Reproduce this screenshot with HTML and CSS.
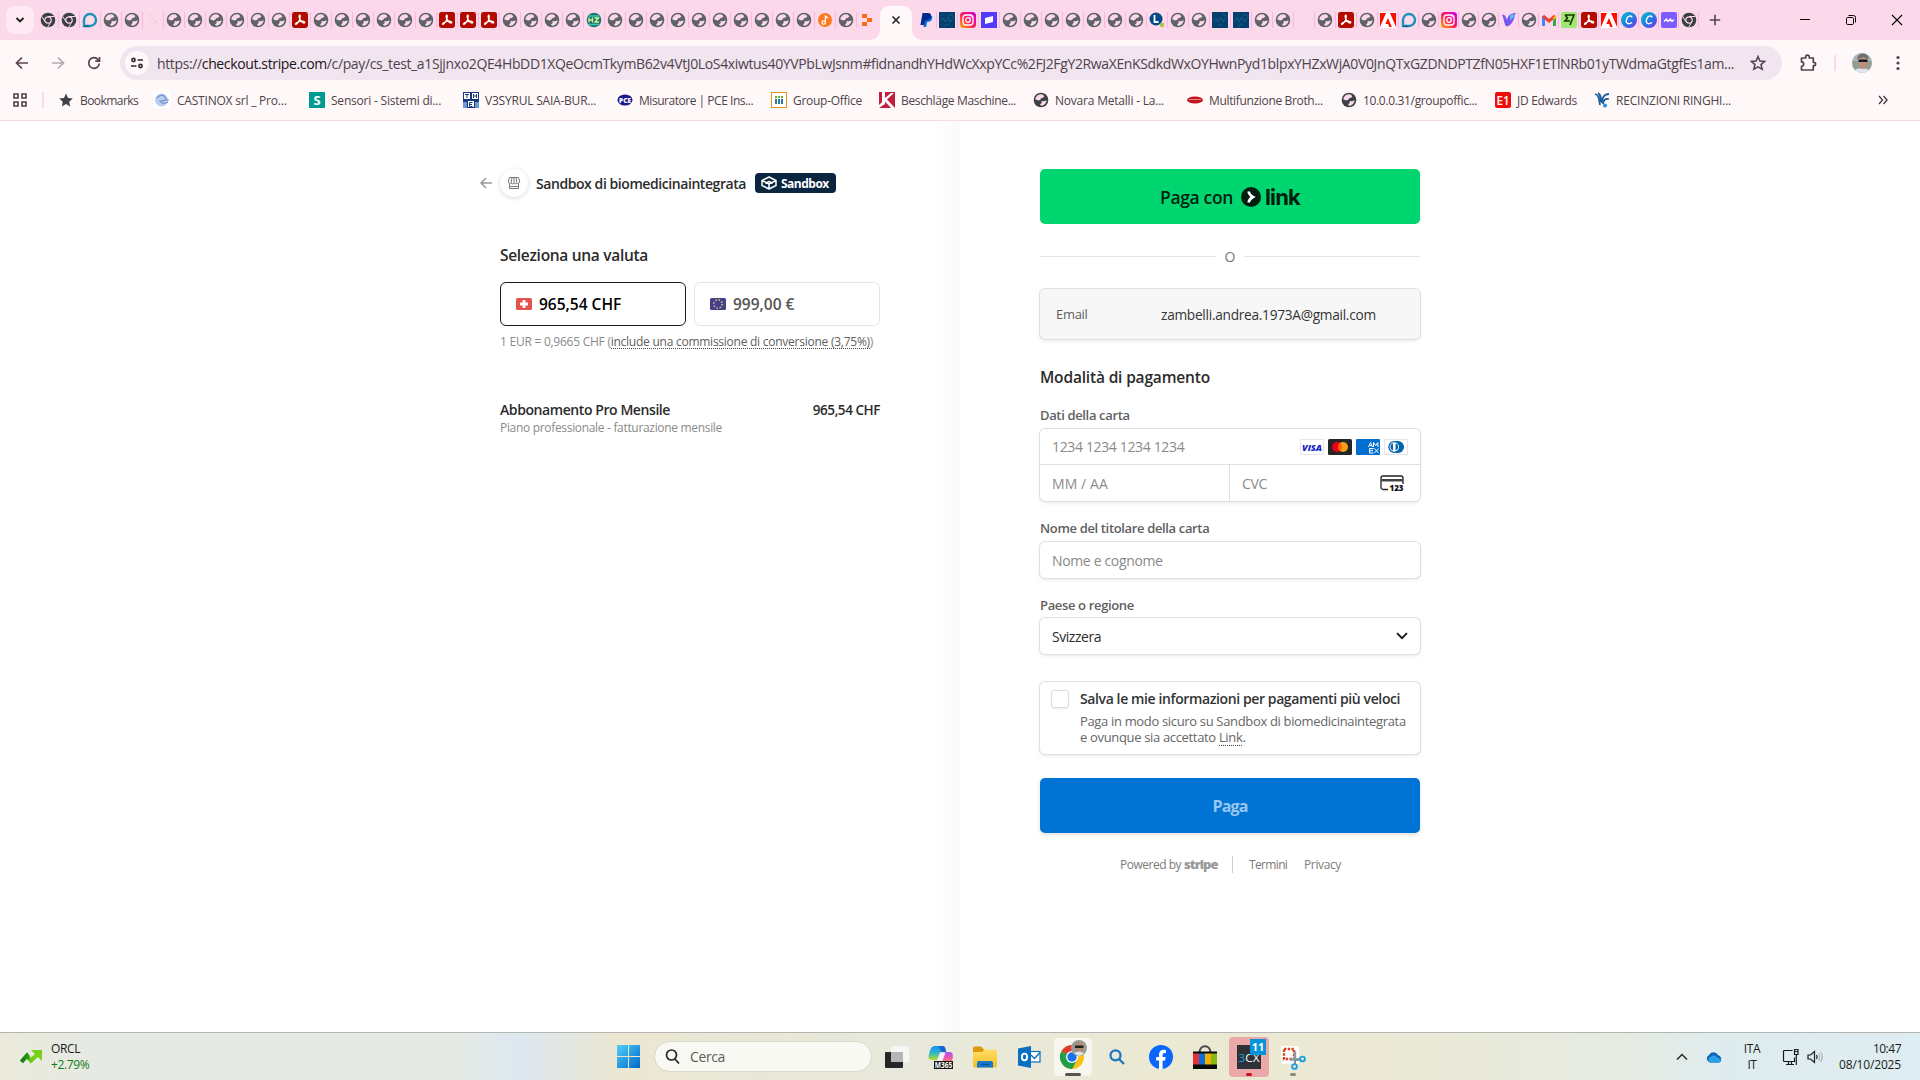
FILE: index.html
```html
<!DOCTYPE html>
<html lang="it">
<head>
<meta charset="utf-8">
<title>Sandbox di biomedicinaintegrata</title>
<link rel="stylesheet" href="styles.css">
</head>
<body>
<svg class="defs" width="0" height="0">
  <defs>
    <linearGradient id="ig" x1="0" y1="1" x2="1" y2="0"><stop offset="0" stop-color="#ffb300"/><stop offset=".45" stop-color="#ff1f5a"/><stop offset="1" stop-color="#c800e0"/></linearGradient>
    <linearGradient id="cv" x1="0" y1="0" x2="1" y2="1"><stop offset="0" stop-color="#00c4cc"/><stop offset=".5" stop-color="#1f7fe0"/><stop offset="1" stop-color="#7d2ae8"/></linearGradient>
    <linearGradient id="win" x1="0" y1="0" x2="1" y2="1"><stop offset="0" stop-color="#4fd0fb"/><stop offset="1" stop-color="#0067c8"/></linearGradient>
    <linearGradient id="fold" x1="0" y1="0" x2="0" y2="1"><stop offset="0" stop-color="#ffdf6b"/><stop offset="1" stop-color="#f9bd20"/></linearGradient>
    <linearGradient id="up" x1="0" y1="0" x2="1" y2="0"><stop offset="0" stop-color="#107c10"/><stop offset=".45" stop-color="#2a9a18"/><stop offset=".5" stop-color="#66c90e"/><stop offset="1" stop-color="#73d216"/></linearGradient>
    <linearGradient id="cop1" x1="0" y1="0" x2="0" y2="1"><stop offset="0" stop-color="#1b8df0"/><stop offset=".5" stop-color="#2fb6c8"/><stop offset="1" stop-color="#b6dc2c"/></linearGradient>
    <linearGradient id="cop2" x1="0" y1="0" x2="0" y2="1"><stop offset="0" stop-color="#a453f5"/><stop offset=".5" stop-color="#e85bb0"/><stop offset="1" stop-color="#ff8a5c"/></linearGradient>
  </defs>
  <symbol id="globe" viewBox="0 0 16 16"><circle cx="8" cy="8" r="7.3" fill="currentColor"/><path d="M7.4 2.2 9.8 2.6 11.4 4.4 9.6 6 8 6.2 7.4 7.8 5.2 8.6 2.2 7.2C2.6 4.6 4.6 2.6 7.4 2.2ZM8.6 9 11 9.2 13.6 8.2C13.4 11.2 11.2 13.6 8 13.8L7 12.4 8.6 11Z" fill="#fbd9ea"/></symbol>
  <symbol id="chrome-grey" viewBox="0 0 16 16"><circle cx="8" cy="8" r="7.3" fill="#3c3f43"/><circle cx="8" cy="8" r="3.2" fill="none" stroke="#fbd9ea" stroke-width="1.2"/><path d="M8 4.5h6.4M5 9.7 1.8 4.4M11 9.7 7.8 15" stroke="#fbd9ea" stroke-width="1"/></symbol>
  <symbol id="pdf" viewBox="0 0 16 16"><rect width="16" height="16" rx="2.4" fill="#b30b00"/><path d="M7.4 3.2c1.6-.4.8 3.2-.2 5.2S4.4 13 3.5 12.3C2.6 11.2 7.500 9 10.5 9.200s2.6 2 1.4 1.9C9.6 10.9 6.200 5.400 7.400 3.200Z" fill="none" stroke="#fff" stroke-width="1.2"/></symbol>
  <symbol id="drop" viewBox="0 0 16 16"><path d="M2 14V8a6 6 0 1 1 6 6Z" fill="none" stroke="#1993ba" stroke-width="2.4"/><path d="M1 15h7l-3-2Z" fill="#0b5d91"/></symbol>
  <symbol id="faint" viewBox="0 0 16 16"><path d="M4 3h2M6 7h2M9 10h3M4 12h2" stroke="#f4c9da" stroke-width="1.5"/></symbol>
  <symbol id="none" viewBox="0 0 16 16"></symbol>
  <symbol id="hz" viewBox="0 0 16 16"><circle cx="8" cy="8" r="7.3" fill="#1c7768"/><path d="M3 4h10M3 12.500h10" stroke="#35c8c0" stroke-width="1.5"/><path d="M3 5.500v5M3 8h3.500M6.500 5.500v5M8.500 6h4L9 10h4" fill="none" stroke="#d6f29a" stroke-width="1.300"/></symbol>
  <symbol id="note" viewBox="0 0 16 16"><circle cx="8" cy="8" r="7" fill="#ff7a1c"/><circle cx="6.7" cy="10.6" r="1.7" fill="none" stroke="#fff" stroke-width="1.2"/><path d="M8.4 10.5V4l2.6 2" fill="none" stroke="#fff" stroke-width="1.3"/></symbol>
  <symbol id="blocks" viewBox="0 0 16 16"><path d="M3 2h5v4H3zM3 10h5v4H3zM8 6h5v4H8z" fill="#ff6a13"/></symbol>
  <symbol id="paypal" viewBox="0 0 16 16"><path d="M7 4h7c1 3-1 6-5 6l-.8 5H5.500Z" fill="#0070e0"/><path d="M4.500 1h5.500c2.500 0 3.500 1.500 3 4-.7 2.500-3 3.500-6 3.500l-1 4.500H2.500Z" fill="#002991"/></symbol>
  <symbol id="dark" viewBox="0 0 16 16"><rect width="16" height="16" fill="#04406e"/><path d="M1 9 4 6l2 4 3-5 2 5 4-5M5 14l5-2M10 2l4 2" fill="none" stroke="#1f648f" stroke-width=".8"/></symbol>
  <symbol id="insta" viewBox="0 0 16 16"><rect width="16" height="16" rx="3.5" fill="url(#ig)"/><rect x="3" y="3" width="10" height="10" rx="3" fill="none" stroke="#fff" stroke-width="1.3"/><circle cx="8" cy="8" r="2.3" fill="none" stroke="#fff" stroke-width="1.3"/><circle cx="11" cy="5" r=".7" fill="#fff"/></symbol>
  <symbol id="stripe" viewBox="0 0 16 16"><rect width="16" height="16" fill="#533afd"/><path d="M4 6 12 4v6l-8 2Z" fill="#fff"/></symbol>
  <symbol id="ell" viewBox="0 0 16 16"><circle cx="7" cy="7" r="6.5" fill="#044a86"/><path d="M5.5 3v7h4" fill="none" stroke="#fff" stroke-width="1.8"/><circle cx="13" cy="13" r="2.3" fill="#a5c83b"/></symbol>
  <symbol id="adobe" viewBox="0 0 16 16"><rect width="16" height="16" fill="#fff"/><path d="M0 1h6L0 15ZM10 1h6v14ZM8 6l3.800 9H9.300l-1.200-3H5.300Z" fill="#fa0f00"/></symbol>
  <symbol id="vee" viewBox="0 0 16 16"><path d="M1 3c3-1 4 2 5 5 1-5 4-7 9-7-2 2-1 5-3 8-2 4-5 6-7 5C3 12 3 6 1 3Z" fill="#7a56f0"/><path d="M9 3c2 0 4-1 5-1-1 2-2 5-5 6Z" fill="#59b8ff"/></symbol>
  <symbol id="gmail" viewBox="0 0 16 16"><path d="M2.500 14V4" stroke="#4285f4" stroke-width="3"/><path d="M13.500 14V4" stroke="#34a853" stroke-width="3"/><path d="M2 4l6 5 6-5" fill="none" stroke="#ea4335" stroke-width="3.2"/><path d="M12 5.500 15 3v3l-3 2Z" fill="#fbbc04"/></symbol>
  <symbol id="wise" viewBox="0 0 16 16"><rect width="16" height="16" rx="2" fill="#9fe870"/><path d="M4 3h9L9 13M4 3l2.500 3L4 9h5" fill="none" stroke="#163300" stroke-width="1.6"/></symbol>
  <symbol id="canva" viewBox="0 0 16 16"><circle cx="8" cy="8" r="8" fill="url(#cv)"/><path d="M11 5.500C10.500 3 6.500 3.500 5.500 7.500S7.500 13 11 10.500" fill="none" stroke="#fff" stroke-width="1.4"/></symbol>
  <symbol id="wave" viewBox="0 0 16 16"><rect width="16" height="16" rx="2" fill="#7d5cff"/><path d="M3 9.500 5.500 7 7 9.500 9.500 7 11 9.500 13 7.500" fill="none" stroke="#fff" stroke-width="1.3"/></symbol>
</svg>

<header class="browser">
  <div class="tabstrip">
    <button class="tab-search"><svg width="10" height="10" viewBox="0 0 10 10"><path d="M1.500 3 5 6.500 8.500 3" fill="none" stroke="#222" stroke-width="1.9"/></svg></button>
    <div class="tabs" id="tabs-a"></div>
    <div class="tab-active"><svg width="10" height="10" viewBox="0 0 10 10"><path d="M1.500 1.500l7 7M8.500 1.500l-7 7" stroke="#222" stroke-width="1.6"/></svg></div>
    <div class="tabs" id="tabs-b"></div>
    <div class="tabs narrow" id="tabs-c"></div>
    <svg class="new-tab" width="12" height="12" viewBox="0 0 12 12"><path d="M6 .8v10.4M.8 6h10.4" stroke="#55404f" stroke-width="1.6"/></svg>
    <div class="window-controls">
      <svg width="12" height="12" viewBox="0 0 12 12"><path d="M1 5.500h10" stroke="#000"/></svg>
      <svg width="12" height="12" viewBox="0 0 12 12" fill="none" stroke="#000"><rect x="1.500" y="3.500" width="7" height="7" rx="1.2"/><path d="M3.500 1.500h5a2 2 0 0 1 2 2v5"/></svg>
      <svg width="12" height="12" viewBox="0 0 12 12"><path d="M1 1l10 10M11 1 1 11" stroke="#000" stroke-width="1.1"/></svg>
    </div>
  </div>
  <div class="toolbar">
    <svg class="nav" width="16" height="16" viewBox="0 0 16 16" fill="none" stroke="#5a4350" stroke-width="1.7"><path d="M14 8H3M8 2.500 2.500 8 8 13.500"/></svg>
    <svg class="nav" width="16" height="16" viewBox="0 0 16 16" fill="none" stroke="#b5a8af" stroke-width="1.7"><path d="M2 8h11M8 2.500 13.500 8 8 13.500"/></svg>
    <svg class="nav" width="16" height="16" viewBox="0 0 16 16" fill="none" stroke="#5a4350" stroke-width="1.7"><path d="M13.300 8.500A5.300 5.300 0 1 1 12 4.500L13.500 6M13.500 2v4.200H9.300"/></svg>
    <div class="omnibox">
      <span class="site-info"><svg width="14" height="14" viewBox="0 0 14 14" fill="none" stroke="#33262e" stroke-width="1.6"><circle cx="3.500" cy="4" r="1.6"/><path d="M7.500 4H13M1 10h5.500"/><circle cx="10.500" cy="10" r="1.6"/></svg></span>
      <span class="url">https://<b>checkout.stripe.com</b>/c/pay/cs_test_a1Sjjnxo2QE4HbDD1XQeOcmTkymB62v4VtJ0LoS4xiwtus40YVPbLwJsnm#fidnandhYHdWcXxpYCc%2FJ2FgY2RwaXEnKSdkdWxOYHwnPyd1blpxYHZxWjA0V0JnQTxGZDNDPTZfN05HXF1ETlNRb01yTWdmaGtgfEs1am...</span>
      <svg class="star" width="16" height="16" viewBox="0 0 16 16"><path d="M8 1.500 9.900 6l4.800.4L11 9.600l1.200 4.700L8 11.800l-4.200 2.500L5 9.600 1.300 6.400 6.100 6Z" fill="none" stroke="#55404f" stroke-width="1.5"/></svg>
    </div>
    <svg class="ext" width="18" height="18" viewBox="0 0 18 18"><path d="M2.500 4h4.200V3a1.800 1.800 0 0 1 3.600 0v1h4v4.300h.6a1.700 1.700 0 0 1 0 3.400h-.6V16H2.500v-3.700a2.200 2.200 0 0 0 0-4.400Z" fill="none" stroke="#55404f" stroke-width="1.7" stroke-linejoin="round"/></svg>
    <i class="tool-sep"></i>
    <svg class="avatar" width="20" height="20" viewBox="0 0 20 20"><clipPath id="av"><circle cx="10" cy="10" r="10"/></clipPath><g clip-path="url(#av)"><rect width="20" height="20" fill="#8fa08c"/><path d="M0 0h20v8H0Z" fill="#a9b5ba"/><ellipse cx="11" cy="9" rx="5" ry="7" fill="#b98f7c"/><path d="M5 6c1-7 11-7 12 0l-6-2Z" fill="#6d6d6d"/><path d="M6.500 6.500h9v2.500H6.500Z" fill="#1c1c22"/><path d="M2 20c1-5 5-5 9-4 4-1 7 1 8 4Z" fill="#dfe6f2"/></g></svg>
    <svg class="menu" width="4" height="16" viewBox="0 0 4 16" fill="#55404f"><circle cx="2" cy="2.500" r="1.6"/><circle cx="2" cy="8" r="1.6"/><circle cx="2" cy="13.500" r="1.6"/></svg>
  </div>
  <nav class="bookmarks">
    <svg class="apps" width="14" height="14" viewBox="0 0 14 14" fill="none" stroke="#4a4047" stroke-width="1.6"><path d="M1 1h4v4H1zM9 1h4v4H9zM1 9h4v4H1zM9 9h4v4H9z"/></svg>
    <i class="tool-sep"></i>
    <a class="bm b1"><svg viewBox="0 0 16 16"><path d="M8 1.500 10 6l4.800.5L11.200 9.800l1 4.700L8 12l-4.200 2.500 1-4.700L1.200 6.500 6 6Z" fill="#3f4247"/></svg><span>Bookmarks</span></a>
    <a class="bm b2"><svg viewBox="0 0 16 16"><rect width="16" height="16" fill="#fff"/><circle cx="7.500" cy="8" r="6.500" fill="#bccdee"/><path d="M3 6q5-5 8-1t-5 4q3 4 8 1M12 8h3" fill="none" stroke="#6f90cc" stroke-width="1.2"/></svg><span>CASTINOX srl _ Pro...</span></a>
    <a class="bm b3"><svg viewBox="0 0 16 16"><rect width="16" height="16" fill="#009b93"/><text x="8" y="13" font-size="13" font-weight="700" text-anchor="middle" fill="#fff">S</text></svg><span>Sensori - Sistemi di...</span></a>
    <a class="bm b4"><svg viewBox="0 0 16 16"><rect width="16" height="16" fill="#16387f"/><path d="M1 1h6v6H1zM9 1h6v6H9zM5 9h6v6H5z" fill="#fff"/><path d="M2 2.500h4M4 2.500V6M10.500 2v4M13.500 2v4M10.500 4h3M9.500 10.500h-3v4h3M6.500 12.500h2.500" fill="none" stroke="#16387f"/><path d="M0 10h4v6H0zM12 10h4v6h-4z" fill="#6c9ad0"/></svg><span>V3SYRUL SAIA-BUR...</span></a>
    <a class="bm b5"><svg viewBox="0 0 16 16"><ellipse cx="8" cy="8" rx="7.500" ry="5.500" fill="#171b8c"/><text x="8" y="10.600" font-size="7" font-weight="800" text-anchor="middle" textLength="12" lengthAdjust="spacingAndGlyphs" fill="#fff">PCE</text></svg><span>Misuratore | PCE Ins...</span></a>
    <a class="bm b6"><svg viewBox="0 0 16 16"><rect x=".5" y=".5" width="15" height="15" fill="#fff" stroke="#e8930c"/><path d="M4 4h2v2H4zM7 4h2v2H7zM10 4h2v2h-2z" fill="#6ca52c"/><path d="M4 7h2v5H4zM7 7h2v5H7zM10 7h2v5h-2z" fill="#2a7ba6"/></svg><span>Group-Office</span></a>
    <a class="bm b7"><svg viewBox="0 0 16 16"><rect width="16" height="16" fill="#c11e3c"/><path d="M3 0h3v6l6-5h3L8 7.500 16 16h-4L6 9.500V12L0 16V13l3-3Z" fill="#fff"/></svg><span>Beschläge Maschine...</span></a>
    <a class="bm b8"><svg class="dark-globe"><use href="#globe"/></svg><span>Novara Metalli - La...</span></a>
    <a class="bm b9"><svg viewBox="0 0 16 16"><ellipse cx="8" cy="8" rx="8" ry="3.500" fill="#c2161c"/><path d="M2 7.500h12" stroke="#e08a86" stroke-width="1"/></svg><span>Multifunzione Broth...</span></a>
    <a class="bm b10"><svg class="dark-globe"><use href="#globe"/></svg><span>10.0.0.31/groupoffic...</span></a>
    <a class="bm b11"><svg viewBox="0 0 16 16"><rect width="16" height="16" rx="2" fill="#f20d0d"/><text x="8" y="12.800" font-size="12.500" font-weight="600" text-anchor="middle" textLength="13" lengthAdjust="spacingAndGlyphs" fill="#fff">E1</text></svg><span>JD Edwards</span></a>
    <a class="bm b12"><svg viewBox="0 0 16 16"><path d="M1 2c4 1 4 5 5 11M4 1c3 2 3 5 3 9M15 2C10 2 8 6 8 11M15 7c-4-1-6 2-6 5" fill="none" stroke="#1d5f9e" stroke-width="1.8"/><circle cx="11" cy="13.500" r="2" fill="#1f8fd6"/></svg><span>RECINZIONI RINGHI...</span></a>
    <svg class="more" width="10" height="10" viewBox="0 0 10 10"><path d="M1 1l3.500 4L1 9M5.500 1 9 5 5.500 9" fill="none" stroke="#4a4047" stroke-width="1.4"/></svg>
  </nav>
</header>

<main class="page">
  <section class="summary">
    <div class="merchant">
      <svg class="back" width="12" height="12" viewBox="0 0 12 12"><path d="M12 6H1.500M6 1 1 6l5 5" fill="none" stroke="#999" stroke-width="1.5"/></svg>
      <span class="shop"><svg width="14" height="14" viewBox="0 0 14 14" fill="none" stroke="#777" stroke-width="1"><path d="M2.500 1.500h9l1 3.500v1.500a1.400 1.400 0 0 1-2.700 0 1.400 1.400 0 0 1-2.800 0 1.400 1.400 0 0 1-2.800 0 1.400 1.400 0 0 1-2.700 0V5ZM5 1.500 4.300 6M9 1.500 9.700 6M7 1.500V6M2.500 8v4.500h9V8M3 10.500h8"/></svg></span>
      <span class="name">Sandbox di biomedicinaintegrata</span>
      <span class="badge"><svg width="16" height="14" viewBox="0 0 16 14" fill="none" stroke="#fff" stroke-width="1.5" stroke-linejoin="round"><path d="M8 1 15 4.500v5L8 13 1 9.500v-5ZM1 4.500 8 8l7-3.500M8 8v5M4.500 7.500 8 5.500l3.500 2"/></svg><span>Sandbox</span></span>
    </div>
    <h2 class="heading currency-title">Seleziona una valuta</h2>
    <div class="currencies">
      <button class="currency selected"><svg width="16" height="12" viewBox="0 0 16 12"><rect width="16" height="12" rx="1.500" fill="#e5534f"/><path d="M6.600 2h2.800v2.600H12v2.800H9.400V10H6.600V7.400H4V4.600h2.600Z" fill="#fff"/></svg><span>965,54 CHF</span></button>
      <button class="currency"><svg width="16" height="12" viewBox="0 0 16 12"><rect width="16" height="12" rx="1.500" fill="#43408c"/><circle cx="8" cy="6" r="4.200" fill="none" stroke="#f0c65c" stroke-width="1.500" stroke-dasharray="1.500 1.800"/></svg><span>999,00 €</span></button>
    </div>
    <p class="rate">1 EUR = 0,9665 CHF (<u>include una commissione di conversione (3,75%)</u>)</p>
    <div class="item"><span class="product">Abbonamento Pro Mensile</span><span class="amount">965,54 CHF</span></div>
    <p class="desc">Piano professionale - fatturazione mensile</p>
  </section>

  <section class="payment">
    <button class="link-pay"><span class="with">Paga con</span><svg width="20" height="20" viewBox="0 0 20 20"><circle cx="10" cy="10" r="10" fill="#011e0f"/><path d="M7.500 4.500c.7 2.600 2 4.300 4.400 5.500-2.400 1.200-3.700 2.900-4.400 5.500" fill="none" stroke="#fff" stroke-width="2.600"/></svg><span class="link-word">link</span></button>
    <div class="or"><span>O</span></div>
    <div class="box email"><span class="k">Email</span><span class="v">zambelli.andrea.1973A@gmail.com</span></div>
    <h2 class="heading method">Modalità di pagamento</h2>
    <label class="label first">Dati della carta</label>
    <div class="box card">
      <div class="row number"><span class="ph">1234 1234 1234 1234</span>
        <div class="brands">
          <svg viewBox="0 0 24 16"><rect x=".5" y=".5" width="23" height="15" fill="#fff" stroke="#e6e6e6"/><text x="12" y="11.600" font-size="9.500" font-weight="800" font-style="italic" text-anchor="middle" textLength="20" lengthAdjust="spacingAndGlyphs" fill="#1a1fc8">VISA</text></svg>
          <svg viewBox="0 0 24 16"><rect width="24" height="16" rx="1.500" fill="#252525"/><circle cx="9" cy="8" r="5" fill="#eb001b"/><circle cx="15" cy="8" r="5" fill="#f79e1b"/><path d="M12 4a5 5 0 0 1 0 8 5 5 0 0 1 0-8Z" fill="#ff5f00"/></svg>
          <svg viewBox="0 0 24 16"><rect width="24" height="16" rx="1" fill="#016fd0"/><g fill="none" stroke="#fff" stroke-width="1"><path d="M12.500 8l2-4.500 2 4.500M13.300 6.500h2.500M17.500 8V3.500l2.200 3 2.200-3V8M17.500 9.500h-4v4.500h4M13.500 11.700h3.500M18.500 9.500l4 4.500M22.500 9.500l-4 4.500"/></g></svg>
          <svg viewBox="0 0 24 16"><rect x=".5" y=".5" width="23" height="15" fill="#fff" stroke="#e6e6e6"/><path d="M10.500 2h3.500a6 6 0 0 1 0 12h-3.500Z" fill="#0165ac"/><circle cx="10.300" cy="8" r="5.400" fill="#fff" stroke="#0165ac" stroke-width="1.300"/><path d="M9 4.300a3.900 3.900 0 0 0 0 7.400ZM11.600 4.300a3.900 3.900 0 0 1 0 7.400Z" fill="#0165ac"/></svg>
        </div>
      </div>
      <div class="row split">
        <div class="cell"><span class="ph mm">MM / AA</span></div>
        <div class="cell cvc"><span class="ph">CVC</span><svg width="24" height="17" viewBox="0 0 24 17"><path d="M8 14.500H3A2 2 0 0 1 1 12.500V3A2 2 0 0 1 3 1h18a2 2 0 0 1 2 2v6" fill="none" stroke="#222" stroke-width="1.300"/><path d="M1 4h22v2.500H1Z" fill="#444"/><text x="16.500" y="16.300" font-size="8.500" font-weight="800" text-anchor="middle" textLength="14" lengthAdjust="spacingAndGlyphs" fill="#111">123</text></svg></div>
      </div>
    </div>
    <label class="label holder">Nome del titolare della carta</label>
    <div class="box input"><span class="ph">Nome e cognome</span></div>
    <label class="label region">Paese o regione</label>
    <div class="box input select"><span class="country">Svizzera</span><svg width="12" height="8" viewBox="0 0 12 8"><path d="M1 1.200 6 6.200l5-5" fill="none" stroke="#111" stroke-width="1.700"/></svg></div>
    <div class="box save">
      <i class="check"></i>
      <div>
        <div class="save-title">Salva le mie informazioni per pagamenti più veloci</div>
        <p class="save-text">Paga in modo sicuro su Sandbox di biomedicinaintegrata<br>e ovunque sia accettato <u>Link</u>.</p>
      </div>
    </div>
    <button class="pay">Paga</button>
    <footer class="foot"><span class="powered">Powered by</span><span class="stripe">stripe</span><i></i><span class="terms">Termini</span><span class="privacy">Privacy</span></footer>
  </section>
</main>

<div class="taskbar">
  <div class="widget"><svg width="22" height="14" viewBox="0 0 22 14"><path d="M1.500 12 7 5.500l4 5L17 5" fill="none" stroke="url(#up)" stroke-width="4.200"/><path d="M11 0h11v11Z" fill="#73d216"/></svg><div class="quote"><span>ORCL</span><span class="gain">+2.79%</span></div></div>
  <div class="dock">
    <span class="app"><svg width="23" height="23" viewBox="0 0 23 23" fill="url(#win)"><path d="M0 0h11v11H0zM12 0h11v11H12zM0 12h11v11H0zM12 12h11v11H12z"/></svg></span>
    <div class="search"><svg width="15" height="15" viewBox="0 0 15 15" fill="none" stroke="#222" stroke-width="1.700"><circle cx="6.500" cy="6" r="5"/><path d="M10 10l4 4.500"/></svg><span>Cerca</span></div>
    <span class="app"><svg width="24" height="22" viewBox="0 0 24 22"><rect y="6" width="18" height="16" rx="1" fill="#262626"/><rect x="6" width="18" height="16" rx="1" fill="#f6f6f6"/><path d="M6 6h12v10H6Z" fill="#b5b5b5"/></svg></span>
    <span class="app"><svg width="26" height="24" viewBox="0 0 26 24"><path d="M7 1h7c3 0 3.500 2 4 6h-4c-2 0-3 2-3.500 4L9 15H4c-4 0-4-3-3-6 1-3.500 2-8 6-8Z" fill="url(#cop1)"/><path d="M10 1h4c3 0 3.500 2 4 6h-5c-1-2-1-5-3-6Z" fill="#1464d6"/><path d="M18 7h3c4 0 4.500 3 3.500 7l-1.500 4h-13l3.500-8c.8-2 2-3 4.500-3Z" fill="url(#cop2)"/><path d="M11.500 11l2-3.500h4L14 17h-4Z" fill="#f3eefa"/><rect x="6" y="16" width="19" height="8" fill="#111"/><text x="15.500" y="22.900" font-size="8" font-weight="700" text-anchor="middle" textLength="17.500" lengthAdjust="spacingAndGlyphs" fill="#fff">M365</text></svg></span>
    <span class="app"><svg width="24" height="24" viewBox="0 0 24 24"><path d="M0 3a1.500 1.500 0 0 1 1.500-1.500H8l3 3V9H0Z" fill="#d99a0c"/><path d="M0 7h9l2.500-2.500H22.500A1.500 1.500 0 0 1 24 6v15a1.500 1.500 0 0 1-1.500 1.500h-21A1.500 1.500 0 0 1 0 21Z" fill="url(#fold)"/><path d="M4 22.500V18a2 2 0 0 1 2-2h12a2 2 0 0 1 2 2v4.500Z" fill="#1478cc"/><path d="M8 19.500h8" stroke="#0b4f92" stroke-width="1.200"/></svg></span>
    <span class="app"><svg width="24" height="24" viewBox="0 0 24 24"><rect x="12" y="6.500" width="11" height="10.500" fill="#fff" stroke="#0a6fc2" stroke-width="1.200"/><path d="M14 10l3.500 3.500L23 7.500" fill="none" stroke="#0a6fc2" stroke-width="1.400"/><path d="M1 3.500 14 1v22L1 20.500Z" fill="#0a6fc2"/><ellipse cx="7.500" cy="12" rx="2.600" ry="3.400" fill="none" stroke="#fff" stroke-width="1.900"/></svg></span>
    <span class="app open"><svg width="28" height="30" viewBox="0 0 28 30"><circle cx="13" cy="18" r="12" fill="#fbc116"/><path d="M13 18 2.600 12A12 12 0 0 1 23.400 12H13Z" fill="#e33b2e"/><path d="M2.600 12A12 12 0 0 0 13 30l5.200-9L7.800 21Z" fill="#1e9e4a"/><path d="M13 18 2.600 12l5.200 9Z" fill="#1e9e4a"/><circle cx="13" cy="18" r="6" fill="#fff"/><circle cx="13" cy="18" r="4.700" fill="#1a73e8"/><circle cx="20" cy="9" r="8" fill="#98a096"/><path d="M15.500 7c0-6 9-6 9 0v4c-1 4-7 4-8 0Z" fill="#b28a7a"/><path d="M16 6.500h8.500V9H16Z" fill="#222"/><path d="M15 14.500q5-4 10 0L20.500 17Z" fill="#e0e4ec"/></svg><i></i></span>
    <span class="app"><svg width="16" height="16" viewBox="0 0 16 16" fill="none" stroke="#1b78c2" stroke-width="2.300"><circle cx="6.500" cy="6.300" r="5"/><path d="M10 10l5 5"/></svg></span>
    <span class="app"><svg width="24" height="24" viewBox="0 0 24 24"><circle cx="12" cy="12" r="12" fill="#0866ff"/><path d="M10 24v-8.500H7.200V12H10v-1.800C10 6.300 11.800 4.700 15 4.700c.7 0 1.500.1 1.900.2v3.200h-1.300c-1.500 0-2 .7-2 2V12h3.100l-.6 3.500h-2.500V24Z" fill="#fff"/></svg></span>
    <span class="app"><svg width="24" height="24" viewBox="0 0 24 24"><path d="M6.500 8C6.500-1 17.500-1 17.500 8" fill="none" stroke="#444" stroke-width="2"/><rect y="6.500" width="24" height="17.500" fill="#0a0a0a"/><path d="M0 8.500h6v11H0z" fill="#e53238"/><path d="M6 8.500h6v11H6z" fill="#0a6fd8"/><path d="M12 8.500h6v11h-6z" fill="#f5af02"/><path d="M18 8.500h6v11h-6z" fill="#86b817"/></svg></span>
    <span class="app alert"><svg width="30" height="30" viewBox="0 0 30 30"><rect x="1" y="6" width="24" height="24" fill="#2e3236"/><text x="2.500" y="22.500" font-size="11.500" textLength="21" lengthAdjust="spacingAndGlyphs" fill="#fff"><tspan fill="#14a0dc">3</tspan>CX</text><rect x="14" width="16" height="16" fill="#0694d8"/><text x="22" y="12" font-size="11" font-weight="700" text-anchor="middle" fill="#fff">11</text></svg><i></i></span>
    <span class="app dim"><svg width="26" height="26" viewBox="0 0 26 26"><rect x="1" y="2" width="18" height="18" rx="2" fill="#fff"/><rect x="4" y="5" width="10" height="10" fill="none" stroke="#d8401c" stroke-width="2.400" stroke-dasharray="2.400 1.300"/><path d="M15 7.500v9.500M10 15.500h9" stroke="#8e9aa3" stroke-width="2.400"/><circle cx="14.500" cy="22.500" r="2.400" fill="none" stroke="#1a9fe0" stroke-width="1.900"/><circle cx="22.500" cy="15" r="2.400" fill="none" stroke="#1a9fe0" stroke-width="1.900"/><path d="M15 20v-3.500M16 15.500h4" fill="none" stroke="#6d8ea3" stroke-width="1.900"/></svg><i></i></span>
  </div>
  <div class="tray">
    <svg class="chev" width="12" height="8" viewBox="0 0 12 8"><path d="M1 6.500 6 1.500l5 5" fill="none" stroke="#222" stroke-width="1.400"/></svg>
    <svg class="cloud" width="16" height="12" viewBox="0 0 16 12"><path d="M4 11.500A4 4 0 0 1 3 4 5 5 0 0 1 12 4a4 4 0 0 1 1 7.500Z" fill="#0a62b8"/><path d="M4 11.500a3.500 3.500 0 0 1-1-5L8 4l7.500 5a2.600 2.600 0 0 1-2.500 2.500Z" fill="#28a0ea"/></svg>
    <div class="lang"><span>ITA</span><span>IT</span></div>
    <svg class="net" width="18" height="18" viewBox="0 0 18 18" fill="none" stroke="#1c1c1c" stroke-width="1.200"><path d="M10.500 2.500h-8a1 1 0 0 0-1 1v9a1 1 0 0 0 1 1h10v-4M4 16.500h8M6.500 13.500v3M9.500 13.500v3M12.500 1.500h3.500v5h-3.500ZM14.300 6.500V17M12.500 3.500H16"/></svg>
    <svg class="vol" width="17" height="14" viewBox="0 0 17 14" fill="none" stroke="#1c1c1c" stroke-width="1.200"><path d="M1 5v4h2.500L7.500 12.500v-11L3.500 5ZM9.500 5q1.300 2 0 4"/><path d="M11.500 3.500q2.500 3.500 0 7M13.500 2q3.500 5 0 10" stroke="#aab4ba"/></svg>
    <div class="clock"><span class="time">10:47</span><span class="date">08/10/2025</span></div>
  </div>
</div>
<script src="tabs.js"></script>
</body>
</html>
```
FILE: styles.css
```css
* { box-sizing: border-box; }
body { margin: 0; width: 1920px; height: 1080px; overflow: hidden; background: #fff; font-family: "Open Sans", "Noto Sans", sans-serif; color: #1a1a1a; display: flex; flex-direction: column; }
button { font: inherit; letter-spacing: inherit; border: 0; padding: 0; background: none; }
h2, p { margin: 0; }
svg { display: block; flex: none; letter-spacing: 0; }
span, p, label { white-space: nowrap; }
.defs { position: absolute; }

/* Browser window */
.browser { height: 121px; background: #fff8f8; border-bottom: 1px solid #f0dbe7; flex: none; }
.tabstrip { display: flex; align-items: center; height: 40px; background: #fbd9ea; padding-left: 6px; }
.tab-search { width: 28px; height: 28px; border-radius: 9px; background: #fdeaf3; display: grid; place-items: center; margin-right: 3.5px; }
.tabs { display: flex; height: 16px; }
.tab { width: 21px; height: 16px; display: grid; place-items: center; color: #5f6368; border-right: 1.5px solid #ffb5e1; }
.tab svg { width: 16px; height: 16px; margin-left: 1px; }
#tabs-a .tab:last-child { border-right-color: transparent; }
.narrow .tab { width: 20px; }
.tab-active { width: 32px; height: 34px; align-self: flex-end; margin: 0 3.5px 0 2.5px; background: #fff8f8; border-radius: 9px 9px 0 0; display: grid; place-items: center; padding-bottom: 6px; position: relative; }
.tab-active::before, .tab-active::after { content: ""; position: absolute; bottom: 0; width: 10px; height: 10px; }
.tab-active::before { left: -10px; background: radial-gradient(circle at 0 0, transparent 9.5px, #fff8f8 10px); }
.tab-active::after { right: -10px; background: radial-gradient(circle at 100% 0, transparent 9.5px, #fff8f8 10px); }
.new-tab { margin-left: 10px; }
.window-controls { display: flex; gap: 34px; margin-left: auto; padding-right: 17px; }

.toolbar { height: 46px; display: flex; align-items: center; background: #fff8f8; padding-left: 14px; }
.nav { margin-right: 20px; }
.omnibox { width: 1662px; height: 34px; flex: none; border-radius: 17px; background: #f1e5ef; display: flex; align-items: center; padding: 0 16px 0 5px; margin-left: -2px; }
.site-info { width: 24px; height: 24px; flex: none; border-radius: 50%; background: #fff8f8; display: grid; place-items: center; }
.url { font-size: 14px; letter-spacing: -.37px; color: #50424c; margin-left: 8px; }
.url b { font-weight: 400; color: #1d1419; }
.star { margin-left: auto; }
.ext { margin-left: 17px; }
.tool-sep { width: 2px; height: 16px; flex: none; background: #fbd9ea; }
.toolbar .tool-sep { margin: 0 16px 0 17px; }
.menu { margin-left: 24px; }

.bookmarks { height: 28px; display: flex; align-items: center; font-size: 12px; letter-spacing: -.21px; color: #4d434a; padding-left: 13px; }
.bookmarks .tool-sep { margin: 0 14px 0 15px; }
.bm { display: flex; align-items: center; gap: 6px; height: 16px; width: 154px; flex: none; }
.bm svg { width: 16px; height: 16px; }
.dark-globe { color: #3c3f43; }
.b1 { width: 96px; letter-spacing: -.55px; }
.b2 { width: 155px; }
.b2 span { margin-left: 1px; }
.b5 { letter-spacing: -.47px; }
.b6 { width: 108px; letter-spacing: -.28px; }
.b7, .b9, .b10 { letter-spacing: -.34px; }
.b11 { width: 99px; letter-spacing: -.3px; }
.more { margin-left: 130px; }

/* Order summary */
.page { height: 911px; display: grid; grid-template-columns: 960px 960px; flex: none; }
.summary { padding: 48px 80px 0 500px; background: linear-gradient(to right, #fff 935px, #fafafa 960px); }
.merchant { display: flex; align-items: center; height: 28px; margin-left: -20px; }
.shop { width: 28px; height: 28px; border-radius: 50%; box-shadow: 0 1px 4px rgba(0,0,0,.16); display: grid; place-items: center; margin: 0 8px; background: #fff; }
.name { font-size: 14px; letter-spacing: -.43px; font-weight: 600; color: #2b2b2b; width: 210px; }
.badge { width: 81px; height: 20px; margin-left: 9px; border-radius: 4px; background: #0a2540; color: #fff; display: flex; align-items: center; gap: 4px; padding-left: 6px; font-size: 12px; letter-spacing: -.5px; font-weight: 700; }
.heading { font-size: 15.5px; line-height: 24px; font-weight: 600; color: #2b2b2b; }
.currency-title { margin-top: 46px; letter-spacing: -.3px; }
.currencies { display: flex; gap: 8px; margin-top: 15px; }
.currency { width: 186px; height: 44px; border: 1px solid #e4e4e4; border-radius: 6px; display: flex; align-items: center; gap: 7px; padding-left: 15px; font-size: 15.5px; font-weight: 600; color: #555; }
.selected { border-color: #1a1a1a; color: #000; }
.rate { margin-top: 8px; font-size: 12px; line-height: 16px; letter-spacing: -.25px; color: #8a8a8a; }
.rate u { color: #606060; text-decoration: none; border-bottom: 1px dotted #444; display: inline-block; line-height: 12px; }
.item { margin-top: 51px; display: flex; justify-content: space-between; font-size: 14px; line-height: 18px; font-weight: 600; color: #2b2b2b; }
.product { letter-spacing: -.42px; }
.amount { font-size: 13.5px; letter-spacing: -.45px; }
.desc { margin-top: 1px; font-size: 12px; line-height: 16px; letter-spacing: -.32px; color: #8a8a8a; }

/* Payment form */
.payment { padding: 48px 500px 0 80px; display: flex; flex-direction: column; background: #fff; }
.link-pay { height: 55px; border-radius: 5px; background: #00d66f; color: #011e0f; display: flex; align-items: center; padding-left: 120px; }
.with { font-size: 17.5px; font-weight: 600; letter-spacing: -.35px; width: 81px; text-align: left; }
.link-word { font-family: Inter, sans-serif; font-weight: 700; font-size: 22px; letter-spacing: -.85px; margin-left: 4px; }
.or { margin-top: 22px; height: 20px; display: flex; align-items: center; gap: 9px; font-size: 14px; color: #777; }
.or::before, .or::after { content: ""; height: 1px; flex: 1; background: #e4e4e4; }
.box { border-radius: 5px; background: #fff; box-shadow: 0 0 0 1px #e0e0e0, 0 2px 4px rgba(0,0,0,.09); }
.email { margin-top: 23px; height: 50px; background: #f7f7f7; display: flex; align-items: center; padding-left: 16px; font-size: 13px; }
.k { width: 105px; color: #5e5e5e; font-weight: 500; letter-spacing: -.31px; }
.v { font-size: 13.7px; letter-spacing: -.28px; color: #333; }
.method { margin-top: 26px; letter-spacing: -.17px; }
.label { margin-top: 18px; font-size: 13px; line-height: 18px; font-weight: 600; letter-spacing: -.35px; color: #606060; }
.first { margin-top: 17px; }
.card { margin-top: 5px; height: 72px; }
.row { display: flex; align-items: center; }
.number { height: 35px; padding: 0 12px; justify-content: space-between; }
.ph { color: #8a8a8a; font-size: 14px; letter-spacing: -.35px; }
.mm { letter-spacing: .1px; }
.brands { display: flex; gap: 4px; }
.brands svg { width: 24px; height: 16px; }
.split { height: 37px; border-top: 1px solid #e0e0e0; }
.cell { width: 189px; height: 36px; display: flex; align-items: center; justify-content: space-between; padding: 0 12px; }
.cvc { width: 191px; padding-right: 16px; border-left: 1px solid #e0e0e0; }
.input { margin-top: 5px; height: 36px; display: flex; align-items: center; justify-content: space-between; padding: 0 12px; }
.select { margin-top: 4px; font-size: 14px; letter-spacing: -.46px; color: #2b2b2b; }
.save { margin-top: 28px; height: 72px; padding: 8px 11px; display: flex; gap: 11px; }
.check { width: 18px; height: 18px; border: 1px solid #dcdcdc; border-radius: 3px; box-shadow: 0 1px 2px rgba(0,0,0,.08); flex: none; }
.save-title { font-size: 14px; line-height: 18px; font-weight: 600; letter-spacing: -.39px; color: #333; white-space: nowrap; }
.save-text { margin-top: 5px; font-size: 13px; line-height: 16px; letter-spacing: -.335px; color: #666; }
.save-text u { text-decoration: none; border-bottom: 1px dotted #444; display: inline-block; line-height: 15px; }
.pay { margin-top: 24px; height: 55px; border-radius: 5px; background: #0074d4; color: #99c7ee; font-size: 16px; font-weight: 700; letter-spacing: -.8px; box-shadow: 0 2px 4px rgba(0,0,0,.12); }
.foot { margin-top: 21px; height: 20px; display: flex; align-items: center; font-size: 12px; color: #7c7c7c; padding-left: 80px; }
.powered { width: 64px; letter-spacing: -.49px; }
.stripe { width: 33px; font-size: 13px; font-weight: 800; letter-spacing: -1px; color: #9a9a9a; }
.foot i { width: 1px; height: 17px; background: #d0d0d0; margin: 0 16px 0 15px; }
.terms { width: 55px; letter-spacing: -.65px; }
.privacy { letter-spacing: -.37px; }

/* Taskbar */
.taskbar { height: 48px; border-top: 1px solid #b4b6b2; display: flex; align-items: center; font-size: 12px; color: #1c1c1c; background: linear-gradient(to right, #ebeadb 0, #e6eae3 90px, #e6eae4 450px, #dde8f0 520px, #ece7d2 620px, #e9e8d8 760px, #e8e9dc 900px, #ece9d2 1200px, #ebe9d6 1400px, #e6ebe2 1620px, #dfecee 1720px, #deedf2 1920px); }
.widget { width: 606px; flex: none; display: flex; align-items: center; gap: 9px; padding-left: 20px; letter-spacing: -.35px; }
.quote, .lang, .clock { display: flex; flex-direction: column; line-height: 16px; }
.gain { color: #107c10; }
.dock { display: flex; align-items: center; }
.app { width: 44px; height: 40px; display: grid; place-items: center; position: relative; }
.app i { position: absolute; bottom: 1px; left: 19px; width: 6px; height: 3px; border-radius: 2px; background: #8a8a80; }
.open::before { content: ""; position: absolute; inset: 1px 3px; background: #f8f7ef; border-radius: 4px; }
.open svg { position: relative; margin-top: -6px; }
.app.open i { left: 14px; width: 16px; background: #55564f; }
.alert::before { content: ""; position: absolute; inset: 0 2px; background: #eaa9a8; border-radius: 4px; }
.alert svg { position: relative; margin: -6px 0 0 4px; }
.app.alert i { background: #c4161c; }
.search { width: 218px; height: 31px; margin: 0 3px 0 4px; border: 1px solid #d8d8ce; border-radius: 16px; background: #f9f9f3; display: flex; align-items: center; gap: 10px; padding-left: 10px; font-size: 14px; letter-spacing: -.38px; color: #5c5c58; }
.tray { width: 561px; margin-left: auto; flex: none; display: flex; align-items: center; padding-left: 317px; }
.cloud { margin-left: 18px; }
.lang { align-items: center; width: 20px; margin-left: 20px; letter-spacing: -.4px; }
.net { margin-left: 20px; }
.vol { margin-left: 7px; }
.clock { align-items: flex-end; margin-left: auto; padding-right: 19px; }
.time { letter-spacing: -.5px; }
.date { letter-spacing: -.17px; }
```
FILE: tabs.js
```js
// Icons of the open tabs, left to right; "name*n" repeats an icon n times.
const tabs = {
  'tabs-a': 'chrome-grey*2 drop globe*2 faint globe*6 pdf globe*6 pdf*3 globe*4 hz globe*10 note globe blocks',
  'tabs-b': 'paypal dark insta stripe globe*7 ell globe*2 dark*2 globe*2 none globe pdf globe adobe',
  'tabs-c': 'drop globe insta globe*2 vee globe gmail wise pdf adobe canva*2 wave chrome-grey'
};
for (const [id, list] of Object.entries(tabs)) {
  document.getElementById(id).innerHTML = list.split(' ').map(entry => {
    const [icon, count = 1] = entry.split('*');
    return `<span class="tab"><svg><use href="#${icon}"/></svg></span>`.repeat(count);
  }).join('');
}
```
